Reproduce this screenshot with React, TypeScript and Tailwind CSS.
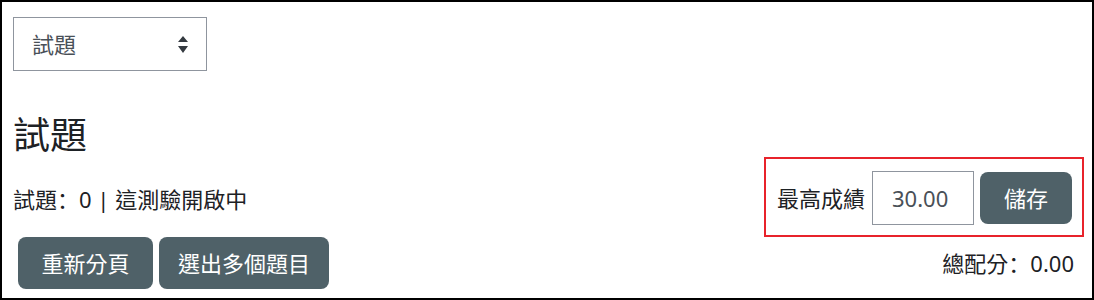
const font = { fontFamily: '"Noto Sans", "Noto Sans CJK TC", sans-serif' };

// Fullwidth colon sits at the left of its cell in the reference, like the SC face draws it
const Colon = () => <span style={{ fontFamily: '"Noto Sans CJK SC", sans-serif' }}>：</span>;

const SortCaret = () => (
  <svg width="10" height="17" viewBox="0 0 10 17" className="text-[#343a40]">
    <path d="M5 0 L10 6 L0 6 Z M0 10 L10 10 L5 17 Z" fill="currentColor" />
  </svg>
);

const App = () => {
  return (
    <div
      className="w-[1094px] h-[300px] overflow-hidden border-2 border-black bg-white text-[#1d2125]"
      style={font}
    >
      {/* section selector */}
      <div className="ml-[11px] mt-[15px] flex h-[54px] w-[194px] items-center justify-between border border-[#8f959e] pl-[18px] pr-[18px] text-[22px] text-[#495057]">
        <span>試題</span>
        <SortCaret />
      </div>

      <h2 className="ml-[11px] mt-[42px] text-[37px] leading-[44px] font-normal">試題</h2>

      <div className="ml-[11px] mr-[8px] flex items-center justify-between">
        <div className="text-[22px] leading-[30px] pt-[2px]">
          試題<Colon />0 | 這測驗開啟中
        </div>
        <div className="flex items-center gap-[6px] border-2 border-[#e8232b] pl-[11px] pr-[10px] pt-[12px] pb-[10px]">
          <label className="mr-[1px] text-[22px]">最高成績</label>
          <input
            className="h-[54px] w-[102px] border border-[#8f959e] px-[19px] text-[22px] text-[#495057] outline-none"
            defaultValue="30.00"
          />
          <button className="h-[52px] w-[92px] rounded-[8px] bg-[#4f6168] text-[22px] text-white">儲存</button>
        </div>
      </div>

      <div className="ml-[16px] mr-[18px] flex items-center justify-between">
        <div className="flex gap-[6px]">
          <button className="h-[52px] w-[135px] rounded-[8px] bg-[#4f6168] text-[22px] text-white">重新分頁</button>
          <button className="h-[52px] w-[170px] rounded-[8px] bg-[#4f6168] text-[22px] text-white">選出多個題目</button>
        </div>
        <div className="text-[22px]">
          總配分<Colon />0.00
        </div>
      </div>
    </div>
  );
};

export default App;
